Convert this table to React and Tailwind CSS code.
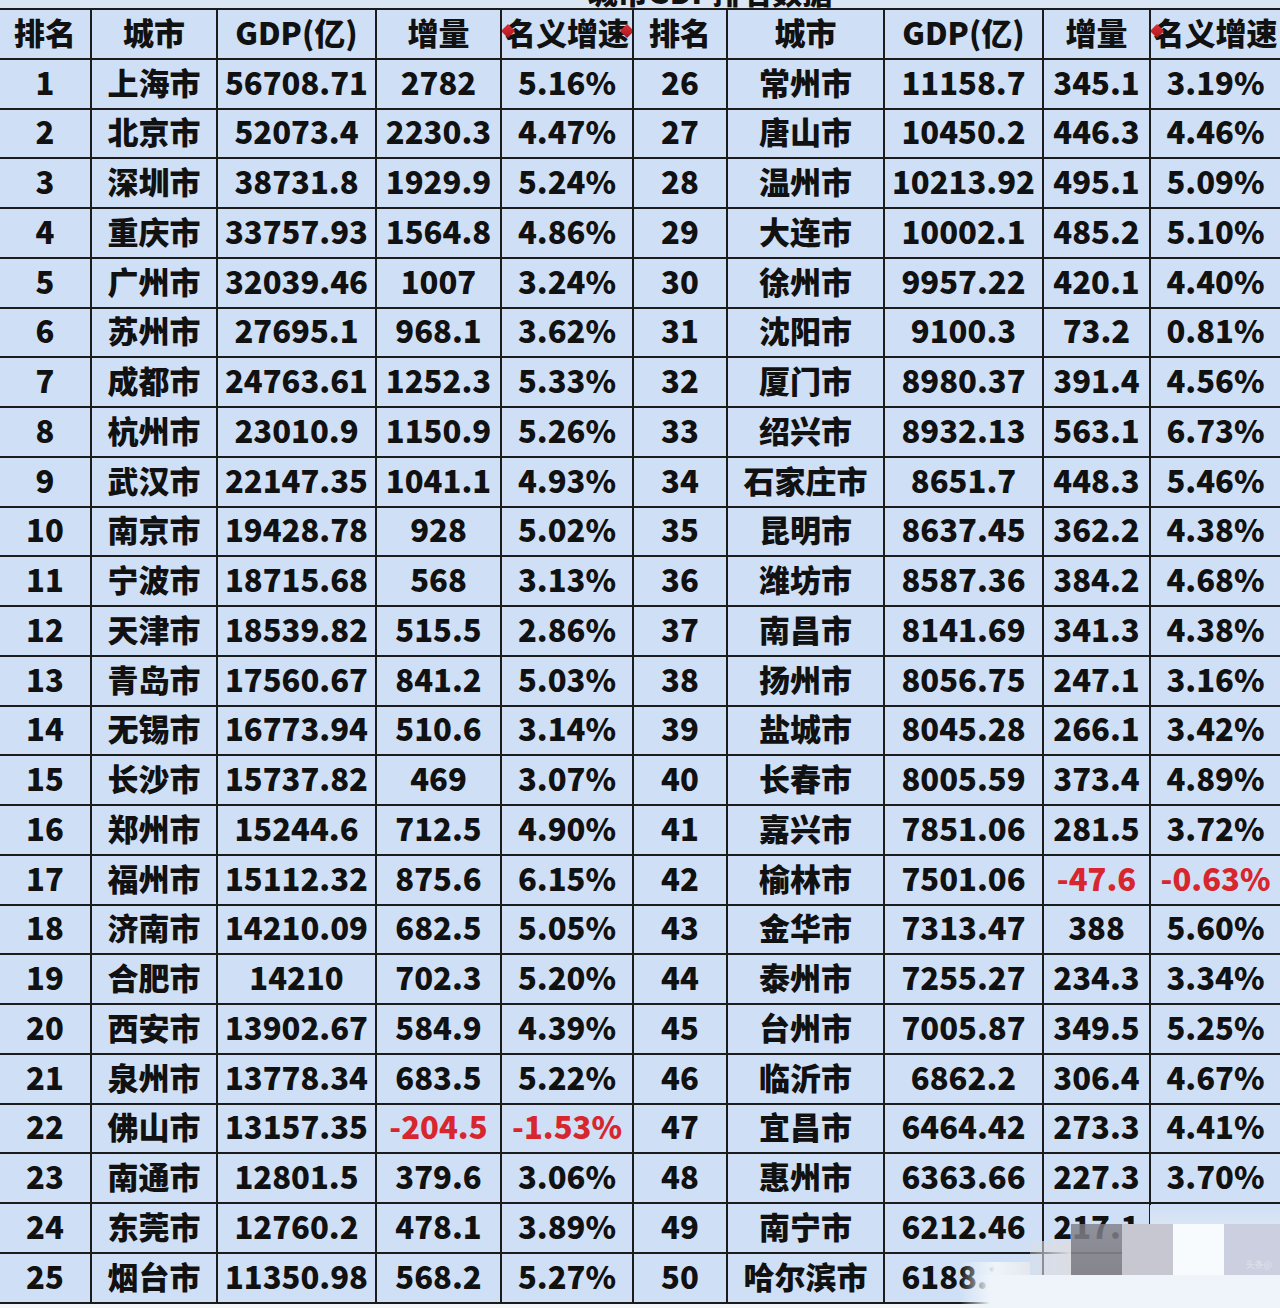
import React from 'react';

/* GDP ranking table — two side-by-side halves, 50 cities */

const left = [
    ['1', '上海市', '56708.71', '2782', '5.16%'],
    ['2', '北京市', '52073.4', '2230.3', '4.47%'],
    ['3', '深圳市', '38731.8', '1929.9', '5.24%'],
    ['4', '重庆市', '33757.93', '1564.8', '4.86%'],
    ['5', '广州市', '32039.46', '1007', '3.24%'],
    ['6', '苏州市', '27695.1', '968.1', '3.62%'],
    ['7', '成都市', '24763.61', '1252.3', '5.33%'],
    ['8', '杭州市', '23010.9', '1150.9', '5.26%'],
    ['9', '武汉市', '22147.35', '1041.1', '4.93%'],
    ['10', '南京市', '19428.78', '928', '5.02%'],
    ['11', '宁波市', '18715.68', '568', '3.13%'],
    ['12', '天津市', '18539.82', '515.5', '2.86%'],
    ['13', '青岛市', '17560.67', '841.2', '5.03%'],
    ['14', '无锡市', '16773.94', '510.6', '3.14%'],
    ['15', '长沙市', '15737.82', '469', '3.07%'],
    ['16', '郑州市', '15244.6', '712.5', '4.90%'],
    ['17', '福州市', '15112.32', '875.6', '6.15%'],
    ['18', '济南市', '14210.09', '682.5', '5.05%'],
    ['19', '合肥市', '14210', '702.3', '5.20%'],
    ['20', '西安市', '13902.67', '584.9', '4.39%'],
    ['21', '泉州市', '13778.34', '683.5', '5.22%'],
    ['22', '佛山市', '13157.35', '-204.5', '-1.53%'],
    ['23', '南通市', '12801.5', '379.6', '3.06%'],
    ['24', '东莞市', '12760.2', '478.1', '3.89%'],
    ['25', '烟台市', '11350.98', '568.2', '5.27%'],
];

const right = [
    ['26', '常州市', '11158.7', '345.1', '3.19%'],
    ['27', '唐山市', '10450.2', '446.3', '4.46%'],
    ['28', '温州市', '10213.92', '495.1', '5.09%'],
    ['29', '大连市', '10002.1', '485.2', '5.10%'],
    ['30', '徐州市', '9957.22', '420.1', '4.40%'],
    ['31', '沈阳市', '9100.3', '73.2', '0.81%'],
    ['32', '厦门市', '8980.37', '391.4', '4.56%'],
    ['33', '绍兴市', '8932.13', '563.1', '6.73%'],
    ['34', '石家庄市', '8651.7', '448.3', '5.46%'],
    ['35', '昆明市', '8637.45', '362.2', '4.38%'],
    ['36', '潍坊市', '8587.36', '384.2', '4.68%'],
    ['37', '南昌市', '8141.69', '341.3', '4.38%'],
    ['38', '扬州市', '8056.75', '247.1', '3.16%'],
    ['39', '盐城市', '8045.28', '266.1', '3.42%'],
    ['40', '长春市', '8005.59', '373.4', '4.89%'],
    ['41', '嘉兴市', '7851.06', '281.5', '3.72%'],
    ['42', '榆林市', '7501.06', '-47.6', '-0.63%'],
    ['43', '金华市', '7313.47', '388', '5.60%'],
    ['44', '泰州市', '7255.27', '234.3', '3.34%'],
    ['45', '台州市', '7005.87', '349.5', '5.25%'],
    ['46', '临沂市', '6862.2', '306.4', '4.67%'],
    ['47', '宜昌市', '6464.42', '273.3', '4.41%'],
    ['48', '惠州市', '6363.66', '227.3', '3.70%'],
    ['49', '南宁市', '6212.46', '217.1', '3.62%'],
    ['50', '哈尔滨市', '6188.31', '', ''],
];

const headers = ['排名', '城市', 'GDP(亿)', '增量', '名义增速'];

/* small red resize marker seen on the 名义增速 header */
const Diamond = ({ side }) => (
    <span
        className={
            side === 'left'
                ? 'absolute left-[1px] top-[16px] w-[10px] h-[10px] rotate-45 bg-gradient-to-br from-[#e0323a] to-[#a8141c]'
                : 'absolute right-[0px] top-[16px] w-[10px] h-[10px] rotate-45 bg-gradient-to-br from-[#e0323a] to-[#a8141c]'
        }
    />
);

const Cell = ({ children, red, extra }) => (
    <div
        className={
            'relative flex items-center justify-center overflow-hidden whitespace-nowrap bg-[#cfe0f6] leading-none pb-[5px] ' +
            (red ? 'text-[#d8262e]' : 'text-[#111111]')
        }
    >
        {children}
        {extra}
    </div>
);

/* the blurred watermark patch sitting over the last rows */
const Watermark = () => (
    <div className="absolute left-[960px] top-[1205px] w-[320px] h-[103px] flex flex-col">
        <div className="h-[19px] flex">
            <div className="w-[190px]"></div>
            <div className="flex-1 bg-gradient-to-b from-[#cfe0f6] to-[#d9e5f3]"></div>
        </div>
        <div className="h-[51px] flex">
            <div className="w-[70px] flex flex-col">
                <div className="h-[38px]"></div>
                <div className="flex-1 bg-gradient-to-r from-[#eef4fa]/0 via-[#eef4fa] to-[#e4e7ee]"></div>
            </div>
            <div className="w-[41px] flex flex-col">
                <div className="h-[17px]"></div>
                <div className="flex-1 bg-gradient-to-r from-[#dcdde3]/40 to-[#dcdde3]"></div>
            </div>
            <div className="w-[51px] bg-gradient-to-b from-[#7e7d85]/80 to-[#86858c]"></div>
            <div className="w-[51px] bg-[#c6c7d1]"></div>
            <div className="w-[51px] bg-[#f7fbfd]"></div>
            <div className="flex-1 bg-[#cbcfe0] flex items-end justify-end pr-[8px] pb-[6px]">
                <span className="text-[9px] font-normal leading-none text-[#e1e4ec]">头条@</span>
            </div>
        </div>
        <div className="flex-1 flex">
            <div className="w-[30px] bg-gradient-to-r from-[#eef4fa]/0 to-[#eef4fa]"></div>
            <div className="flex-1 bg-[#eef4fa]"></div>
        </div>
    </div>
);

export default function App() {
    const rows = left.map((l, i) => [...l, ...right[i]]);

    return (
        <div className="w-[1280px] h-[1308px] overflow-hidden bg-white font-['Noto_Sans_CJK_SC',sans-serif] font-black text-[31px] relative">
            {/* cut-off title strip */}
            <div className="h-[8px] overflow-hidden bg-[#dae6f4] flex justify-center">
                <div className="mt-[-25px] ml-[140px] text-[30px] leading-[32px] text-[#111111]">城市GDP排名数据</div>
            </div>

            {/* table */}
            <div className="grid grid-cols-[90px_124px_157px_123px_130px_92px_155px_157px_105px_129px] auto-rows-[47.75px] gap-[2px] bg-[#1c1c1c] border-y-2 border-[#1c1c1c]">
                {[...headers, ...headers].map((h, i) => (
                    <Cell
                        key={'h' + i}
                        extra={
                            i === 4 ? (
                                <>
                                    <Diamond side="left" />
                                    <Diamond side="right" />
                                </>
                            ) : i === 9 ? (
                                <Diamond side="left" />
                            ) : null
                        }
                    >
                        {h}
                    </Cell>
                ))}
                {rows.map((r, ri) =>
                    r.map((v, ci) => (
                        <Cell key={ri + '-' + ci} red={v.startsWith('-')}>
                            {v}
                        </Cell>
                    ))
                )}
            </div>

            {/* bottom white strip */}
            <div className="h-[5px] bg-[#f6f7f9]"></div>

            <Watermark />
        </div>
    );
}
